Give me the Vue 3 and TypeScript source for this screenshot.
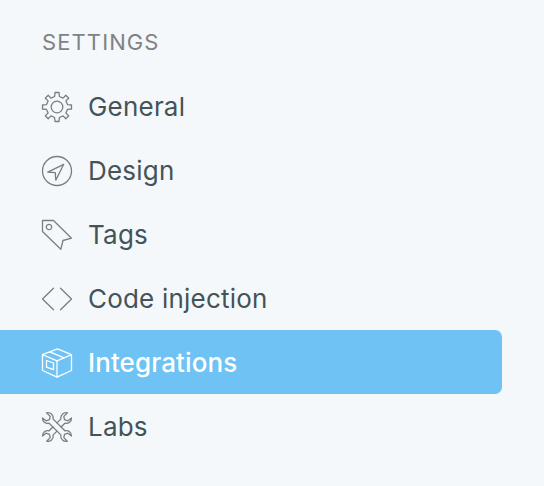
<script setup lang="ts">
import { ref } from 'vue'

interface NavItem {
  label: string
  paths: string[]
}

const items: NavItem[] = [
  {
    label: 'General',
    paths: [
      'M14 1.5H18L18.4 5.5L22.1 7.1L24.8 4.3L27.7 7.2L24.9 9.9L26.5 13.6L30.5 14V18L26.5 18.4L24.9 22.1L27.7 24.8L24.8 27.7L22.1 24.9L18.4 26.5L18 30.5H14L13.6 26.5L9.9 24.9L7.2 27.7L4.3 24.8L7.1 22.1L5.5 18.4L1.5 18V14L5.5 13.6L7.1 9.9L4.3 7.2L7.2 4.3L9.9 7.1L13.6 5.5Z',
      'M21.8 16A5.8 5.8 0 1 1 10.2 16A5.8 5.8 0 1 1 21.8 16Z',
    ],
  },
  {
    label: 'Design',
    paths: [
      'M30.5 16A14.5 14.5 0 1 1 1.5 16A14.5 14.5 0 1 1 30.5 16Z',
      'M22.7 9.3L6.8 17.2L14.3 17.7L14.8 25.2Z',
    ],
  },
  {
    label: 'Tags',
    paths: [
      'M1.5 1.5H12.5L30.5 19.2L22 21.5L19.8 30.3L1.5 12.5Z',
      'M10.7 8A2.7 2.7 0 1 1 5.3 8A2.7 2.7 0 1 1 10.7 8Z',
    ],
  },
  { label: 'Code injection', paths: ['M12.5 5.2L1.5 16L12.5 26.8', 'M19.5 5.2L30.5 16L19.5 26.8'] },
  {
    label: 'Integrations',
    paths: [
      'M1.5 7.7L16.5 1.8L30.5 7.7V23.5L16 30.2L1.5 23.5Z',
      'M1.5 7.7L16 13.8L30.5 7.7',
      'M16 13.8V30.2',
      'M8.8 4.8L23.2 10.8',
      'M5.5 13.5L12.5 16V22.7L5.5 20.2Z',
    ],
  },
  {
    label: 'Labs',
    paths: [
      'M5.5 1.8C9.2.9 12.8 3.8 12.2 8.1L23.9 19.8C27.4 18.8 30.6 21.5 30.5 25L26.9 22.2L23.5 23.3L22.8 26.6L26.3 30.2C22.8 31.1 19.2 28.2 19.8 23.9L8.1 12.2C4.6 13.2 1.4 10.5 1.5 7L5.1 9.8L8.5 8.7L9.2 5.4Z',
      'M16 11.9L19.8 8.1C19.2 3.8 22.8.9 26.5 1.8L22.8 5.4L23.5 8.7L26.9 9.8L30.5 7C30.6 10.5 27.4 13.2 23.9 12.2L20.1 16',
      'M11.9 16L8.1 19.8C4.6 18.8 1.4 21.5 1.5 25L5.1 22.2L8.5 23.3L9.2 26.6L5.7 30.2C9.2 31.1 12.8 28.2 12.2 23.9L16 20.1',
    ],
  },
]

const active = ref('Integrations')
</script>

<template>
  <nav class="sidebar">
    <h2 class="heading">Settings</h2>
    <ul class="list">
      <li
        v-for="item in items"
        :key="item.label"
        class="item"
        :class="{ active: item.label === active }"
        @click="active = item.label"
      >
        <svg class="icon" viewBox="0 0 32 32" aria-hidden="true">
          <path v-for="d in item.paths" :key="d" :d="d" />
        </svg>
        <span class="label">{{ item.label }}</span>
      </li>
    </ul>
  </nav>
</template>

<style>
body {
  margin: 0;
  background: #f4f8fb;
}
</style>

<style scoped>
.sidebar {
  box-sizing: border-box;
  height: 486px;
  padding: 28px 42px 0 0;
  background: #f4f8fb;
  font-family: Inter, sans-serif;
}

.heading {
  margin: 0 0 18px 42px;
  font-size: 22px;
  line-height: 28px;
  font-weight: 400;
  letter-spacing: 1.1px;
  text-transform: uppercase;
  color: #808284;
}

.list {
  margin: 0;
  padding: 0;
  list-style: none;
}

.item {
  display: flex;
  align-items: center;
  gap: 15px;
  height: 64px;
  padding-left: 41px;
  border-radius: 0 7px 7px 0;
  color: #455357;
  font-size: 26px;
  letter-spacing: 0.2px;
  cursor: pointer;
}

.icon {
  width: 32px;
  height: 32px;
  margin-top: 2px;
  flex: none;
  fill: none;
  stroke: #7b7e81;
  stroke-width: 1.3;
  stroke-linejoin: round;
  stroke-linecap: round;
}

.active {
  background: #6ec2f4;
  color: #fff;
  font-weight: 500;
  letter-spacing: 0.1px;
}

.active .icon {
  stroke: #fff;
}
</style>
